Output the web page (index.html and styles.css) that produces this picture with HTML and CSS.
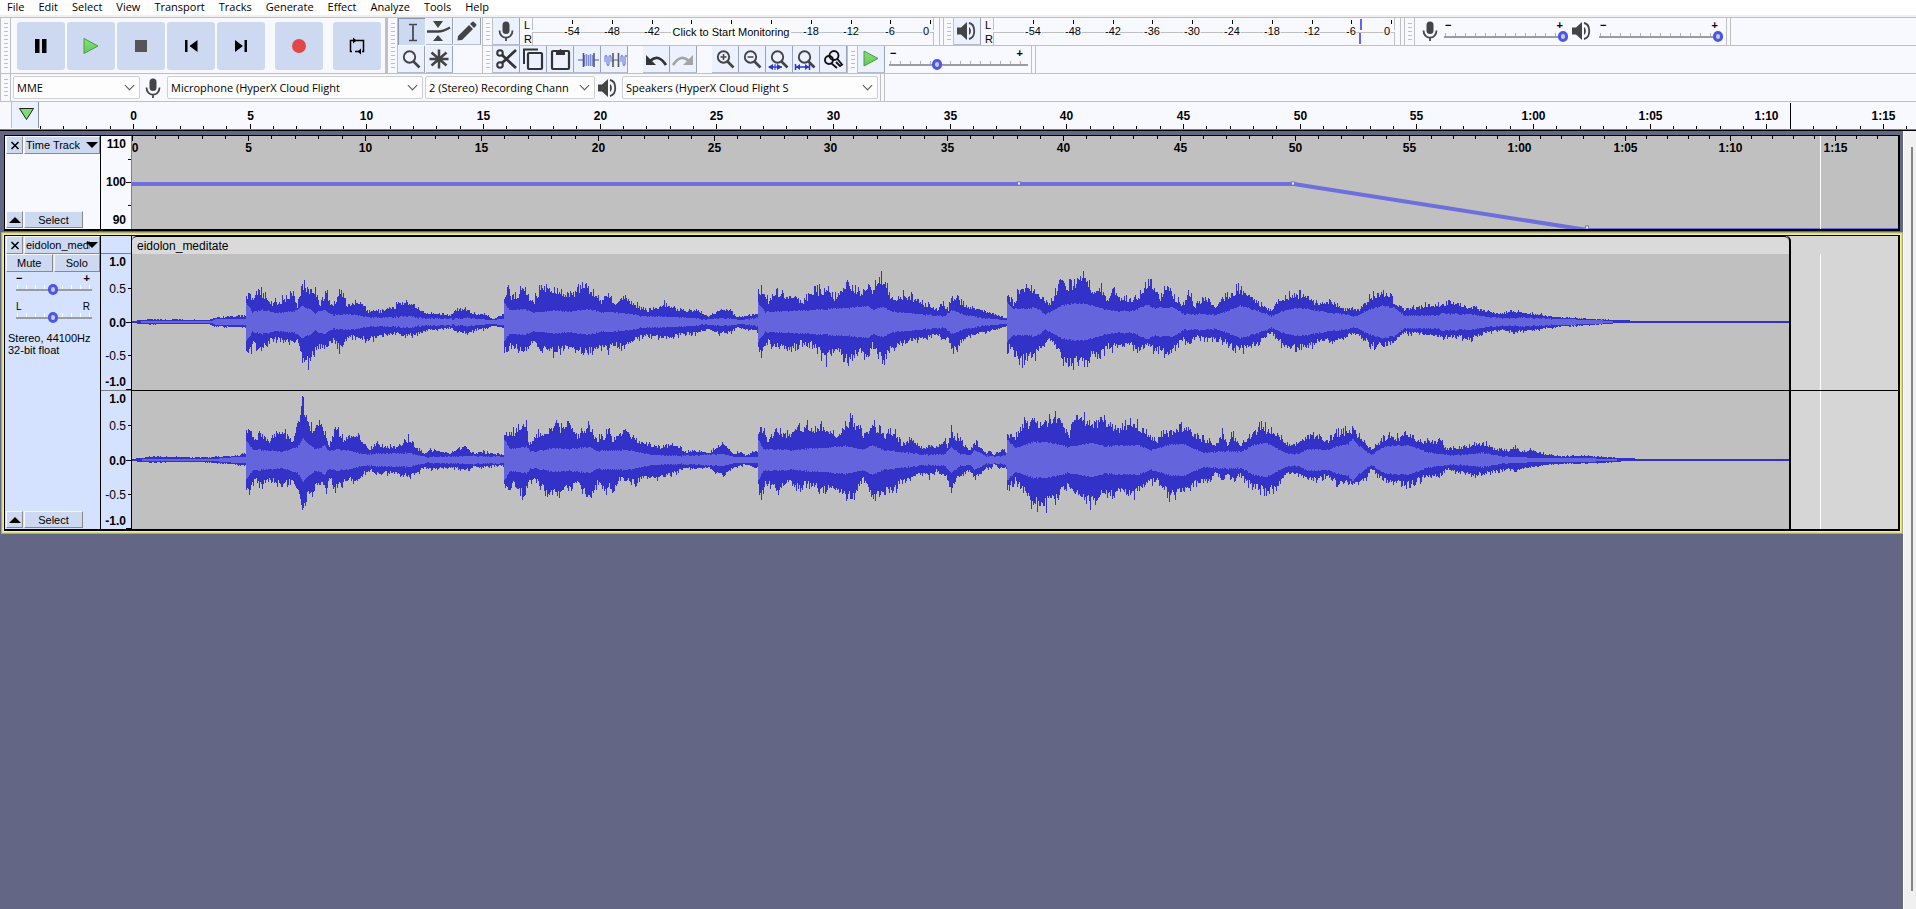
FILE: index.html
```html
<!DOCTYPE html>
<html lang="en">
<head>
  <meta charset="UTF-8">
  <meta name="viewport" content="width=device-width, initial-scale=1.0">
  <title>Audacity</title>
  <link rel="stylesheet" href="styles.css">
</head>
<body>
  <!-- Menu -->
  <nav class="menu">
    <button>File</button><button>Edit</button><button>Select</button><button>View</button><button>Transport</button><button>Tracks</button><button>Generate</button><button>Effect</button><button>Analyze</button><button>Tools</button><button>Help</button>
  </nav>

  <!-- Shared icons -->
  <svg width="0" height="0" class="defs">
    <defs>
      <linearGradient id="green" x1="0" y1="0" x2="0" y2="1"><stop offset="0" stop-color="#8be077"/><stop offset="1" stop-color="#62c95a"/></linearGradient>
      <symbol id="mic" viewBox="0 0 26 26"><rect x="9.500" y="3.500" width="7" height="12.500" rx="3.500" fill="#444"/><path d="M6.500 12.500c0 9.500 13 9.500 13 0M13 19v4" fill="none" stroke="#444" stroke-width="1.800"/></symbol>
      <symbol id="speaker" viewBox="0 0 26 26"><path d="M3 9.500h4L13 4v18l-6-5.500H3z" fill="#444"/><path d="M15 9c2.500 1.500 2.500 6.500 0 8" fill="#444"/><path d="M15 5c7 1.500 7 14.500 0 16" fill="none" stroke="#444" stroke-width="1.800"/></symbol>
      <symbol id="lens" viewBox="0 0 26 26"><circle cx="11.500" cy="11" r="5.700" fill="none" stroke="#444" stroke-width="1.900"/><path d="M15.500 15.500l6 6" stroke="#444" stroke-width="2.600"/></symbol>
    </defs>
  </svg>

  <!-- Toolbars -->
  <header class="dock">
    <div class="bar transport">
      <i class="grip"></i>
      <button class="big" aria-label="Pause"><svg width="24" height="24"><path d="M6 5h4.500v14H6zM13 5h4.500v14H13z"/></svg></button>
      <button class="big" aria-label="Play"><svg width="24" height="24"><path d="M5 4.500v15L19 12z" fill="url(#green)" stroke="#4a9a45"/></svg></button>
      <button class="big" aria-label="Stop"><svg width="24" height="24"><path d="M6 6h12v12H6z" fill="#555"/></svg></button>
      <button class="big" aria-label="Skip to start"><svg width="24" height="24"><path d="M6 6h2.500v12H6zM18.500 6v12l-8-6z"/></svg></button>
      <button class="big" aria-label="Skip to end"><svg width="24" height="24"><path d="M15.500 6H18v12h-2.500zM6 6v12l8-6z"/></svg></button>
      <button class="big apart" aria-label="Record"><svg width="24" height="24"><circle cx="12" cy="12" r="7" fill="#e24646"/></svg></button>
      <button class="big apart" aria-label="Loop"><svg width="24" height="24"><path d="M9 6.500H5.500v11H7M10 17.500h4M10 6.500h8.500v11H17" fill="none" stroke="#000" stroke-width="1.500"/><path d="M8 3.500l3.500 3L8 9.500zM16 14.500l-3.500 3 3.500 3z"/></svg></button>
    </div>

    <div class="bar tools">
      <i class="grip"></i>
      <div class="tool-grid">
        <button class="tool pressed" aria-label="Selection tool"><svg width="26" height="26"><path d="M10 5.500h3l1 .5 1-.5h3M10 21.500h3l1-.5 1 .5h3M14 6v15" fill="none" stroke="#444" stroke-width="1.700"/></svg></button>
        <button class="tool" aria-label="Envelope tool"><svg width="26" height="26"><path d="M1 13.500h11q5 0 12-4" fill="none" stroke="#444" stroke-width="2.500"/><path d="M7 3h10l-5 7zM7 23h10l-5-6z" fill="#444"/></svg></button>
        <button class="tool" aria-label="Draw tool"><svg width="26" height="26"><path d="M4 18l11-11 4 4L8 22l-4.500.5zM16 6l2-2q1-1 2 0l2 2q1 1 0 2l-2 2z" fill="#444"/></svg></button>
        <button class="tool" aria-label="Zoom tool"><svg width="26" height="26"><use href="#lens"/></svg></button>
        <button class="tool" aria-label="Multi-tool"><svg width="26" height="26"><path d="M13 3.500v19M3.500 13h19M5.500 6.500l15 13M20.500 6.500l-15 13" stroke="#444" stroke-width="2.500"/></svg></button>
      </div>
    </div>

    <div class="stack">
      <div class="line">
        <div class="bar">
          <i class="grip"></i>
          <button class="tool" aria-label="Record meter"><svg width="26" height="26"><use href="#mic"/></svg></button>
          <div class="lr"><span>L</span><span>R</span></div>
          <svg class="meter" width="402" height="27" data-meter="record"></svg>
        </div>
        <div class="bar">
          <i class="grip"></i>
          <button class="tool" aria-label="Playback meter"><svg width="26" height="26"><use href="#speaker"/></svg></button>
          <div class="lr"><span>L</span><span>R</span></div>
          <svg class="meter" width="402" height="27" data-meter="play"></svg>
        </div>
        <div class="bar mixer">
          <i class="grip"></i>
          <svg width="26" height="26"><use href="#mic"/></svg>
          <label class="slider level"><span class="ends"><b>−</b><b>+</b></span><input type="range" min="0" max="100" value="100" aria-label="Recording volume"></label>
          <svg width="26" height="26"><use href="#speaker"/></svg>
          <label class="slider level"><span class="ends"><b>−</b><b>+</b></span><input type="range" min="0" max="100" value="100" aria-label="Playback volume"></label>
        </div>
        <div class="filler"></div>
      </div>
      <div class="line">
        <div class="bar edit">
          <i class="grip"></i>
          <div class="group">
            <button class="tool" aria-label="Cut"><svg width="26" height="26"><path d="M23 4L9 17M23 22L9 9" stroke="#333" stroke-width="2.700"/><circle cx="7" cy="7" r="2.800" fill="none" stroke="#333" stroke-width="2"/><circle cx="7" cy="19" r="2.800" fill="none" stroke="#333" stroke-width="2"/></svg></button>
            <button class="tool" aria-label="Copy"><svg width="26" height="26"><path d="M4 18V3.500h14" fill="none" stroke="#333" stroke-width="2"/><rect x="8" y="7" width="14" height="16" rx="1" fill="none" stroke="#333" stroke-width="2.200"/></svg></button>
            <button class="tool" aria-label="Paste"><svg width="26" height="26"><rect x="5" y="5" width="17" height="18" rx="1" fill="none" stroke="#333" stroke-width="2.200"/><path d="M9 5h3q1.500-4 3 0h3v4H9z" fill="#333"/></svg></button>
            <button class="tool" aria-label="Trim"><svg width="26" height="26"><path d="M4 14h5M20 14h5M10.500 9v11M12.500 8v12M14.500 9v11M16.500 8v12M18.500 9v11" stroke="#7b8be0" stroke-width="1.400"/><path d="M9.500 7v14M20 7v14" stroke="#555" stroke-width="1.600"/></svg></button>
            <button class="tool" aria-label="Silence"><svg width="26" height="26"><path d="M4 16v-5q1-3 2 0v7q1 3 2 0v-7q1-3 2 0v5M12 14h5M20 16v-5q1-3 2 0v7q1 3 2 0v-7q1-3 2 0" fill="none" stroke="#7b8be0" stroke-width="1.300"/><path d="M12 7v14M17.500 7v14" stroke="#555" stroke-width="1.600"/></svg></button>
          </div>
          <div class="group">
            <button class="tool" aria-label="Undo"><svg width="26" height="26"><path d="M7 15q8-8 16 4" fill="none" stroke="#333" stroke-width="2.800"/><path d="M3 9v10h10z" fill="#333"/></svg></button>
            <button class="tool" aria-label="Redo"><svg width="26" height="26"><path d="M19 15q-8-8-16 4" fill="none" stroke="#a4a4a4" stroke-width="2.800"/><path d="M23 9v10H13z" fill="#a4a4a4"/></svg></button>
          </div>
          <div class="group">
            <button class="tool" aria-label="Zoom in"><svg width="26" height="26"><use href="#lens"/><path d="M11.500 8v6M8.500 11h6" stroke="#444" stroke-width="1.500"/></svg></button>
            <button class="tool" aria-label="Zoom out"><svg width="26" height="26"><use href="#lens"/><path d="M8.500 11h6" stroke="#444" stroke-width="1.500"/></svg></button>
            <button class="tool" aria-label="Fit selection"><svg width="26" height="26"><use href="#lens"/><path d="M3 21h13" stroke="#2c35c9" stroke-width="1.500"/><path d="M2 21l5-3v6zM16 21l-5-3v6z" fill="#2c35c9"/><path d="M9 18v6" stroke="#2c35c9"/></svg></button>
            <button class="tool" aria-label="Fit project"><svg width="26" height="26"><use href="#lens"/><path d="M2.500 18v6M16.500 18v6M3 21h13" stroke="#2c35c9" stroke-width="1.500"/><path d="M3 21l4-3v6zM16 21l-4-3v6z" fill="#2c35c9"/></svg></button>
            <button class="tool" aria-label="Zoom toggle"><svg width="26" height="26"><g fill="none" stroke="#111" stroke-width="1.900"><circle cx="9" cy="14" r="4"/><circle cx="14" cy="9.500" r="4.500"/><path d="M11 17l6 5M17 12.500l5 6-2 1.500-4-4"/></g></svg></button>
          </div>
        </div>
        <div class="bar speed">
          <i class="grip"></i>
          <button class="tool" aria-label="Play at speed"><svg width="26" height="26"><path d="M6 5v15l14-7.500z" fill="url(#green)" stroke="#4a9a45"/></svg></button>
          <label class="slider wide"><span class="ends"><b>−</b><b>+</b></span><input type="range" min="0" max="100" value="33" aria-label="Playback speed"></label>
        </div>
        <div class="filler"></div>
      </div>
    </div>
  </header>

  <!-- Devices -->
  <div class="devices">
    <div class="bar">
      <i class="grip"></i>
      <span class="drop host"><select aria-label="Audio host"><option>MME</option></select></span>
      <svg width="26" height="26"><use href="#mic"/></svg>
      <span class="drop device"><select aria-label="Recording device"><option>Microphone (HyperX Cloud Flight</option></select></span>
      <span class="drop channels"><select aria-label="Recording channels"><option>2 (Stereo) Recording Chann</option></select></span>
      <svg width="26" height="26"><use href="#speaker"/></svg>
      <span class="drop device"><select aria-label="Playback device"><option>Speakers (HyperX Cloud Flight S</option></select></span>
    </div>
    <div class="filler"></div>
  </div>

  <!-- Timeline -->
  <div class="timeline">
    <button class="pin" aria-label="Pinned play head"><svg width="26" height="26"><path d="M7.500 6.500h14L14.500 17.500z" fill="#7fdc74" stroke="#222"/></svg></button>
    <svg class="ruler" width="1878" height="26" id="timeline"></svg>
  </div>

  <!-- Tracks -->
  <main class="workspace">
    <div class="tracks">
      <section class="track time-track">
        <div class="panel">
          <div class="title-row">
            <button class="chip close" aria-label="Close track"><svg width="16" height="16"><path d="M4.500 5l7 7M11.500 5l-7 7" stroke="#000" stroke-width="1.500"/></svg></button>
            <button class="chip name"><span>Time Track</span><i class="caret"></i></button>
          </div>
          <div class="foot-row">
            <button class="chip close" aria-label="Collapse"><i class="caret up"></i></button>
            <button class="chip select">Select</button>
          </div>
        </div>
        <svg class="scale" width="30" height="93">
          <g class="strong"><text x="25" y="12">110</text><text x="25" y="50">100</text><text x="25" y="88">90</text></g>
          <path d="M27 23.500h4M25 46.500h6M27 69.500h4" stroke="#000"/>
        </svg>
        <div class="body">
          <svg width="1766" height="93" id="warp"></svg>
        </div>
      </section>

      <section class="track audio-track">
        <div class="panel">
          <div class="title-row">
            <button class="chip close" aria-label="Close track"><svg width="16" height="16"><path d="M4.500 5l7 7M11.500 5l-7 7" stroke="#000" stroke-width="1.500"/></svg></button>
            <button class="chip name"><span>eidolon_meditate</span><i class="caret"></i></button>
          </div>
          <div class="mute-row">
            <button class="chip">Mute</button>
            <button class="chip">Solo</button>
          </div>
          <label class="slider small"><span class="ends"><b>−</b><b>+</b></span><input type="range" value="49" aria-label="Gain"></label>
          <label class="slider small"><span class="ends"><em>L</em><em>R</em></span><input type="range" value="49" aria-label="Pan"></label>
          <p class="format">Stereo, 44100Hz<br>32-bit float</p>
          <div class="foot-row">
            <button class="chip close" aria-label="Collapse"><i class="caret up"></i></button>
            <button class="chip select">Select</button>
          </div>
        </div>
        <svg class="scale" width="30" height="293">
          <path d="M0 17.500h31M0 154.500h31" stroke="#808080"/>
          <g class="strong"><text x="25" y="30">1.0</text><text x="25" y="91">0.0</text><text x="25" y="150">-1.0</text><text x="25" y="167">1.0</text><text x="25" y="229">0.0</text><text x="25" y="289">-1.0</text></g>
          <g><text x="25" y="57">0.5</text><text x="25" y="124">-0.5</text><text x="25" y="194">0.5</text><text x="25" y="263">-0.5</text></g>
          <path d="M27 52.500h3M25 86.500h5M27 119.500h3M25 153.500h5M27 189.500h3M25 224.500h5M27 258.500h3M25 292.500h5" stroke="#000"/>
        </svg>
        <div class="body">
          <div class="clip">
            <h2>eidolon_meditate</h2>
            <canvas id="left" width="1657" height="136"></canvas>
            <canvas id="right" width="1657" height="138"></canvas>
          </div>
        </div>
      </section>
    </div>
    <div class="scrollbar"><i></i></div>
  </main>

  <script src="app.js"></script>
</body>
</html>
```

FILE: styles.css
```css
/* General Styles */
* {
  box-sizing: border-box;
}

body {
  margin: 0;
  height: 100vh;
  overflow: hidden;
  display: flex;
  flex-direction: column;
  background-color: #f8f9ff;
  color: #000;
  font-family: "Liberation Sans", Arial, sans-serif;
  font-size: 11px;
}

button {
  display: flex;
  align-items: center;
  justify-content: center;
  padding: 0;
  border: none;
  background: none;
  color: #000;
  font: inherit;
}

svg {
  display: block;
  flex: none;
}

.defs {
  position: absolute;
}

/* Menu */
.menu {
  flex: none;
  display: flex;
  gap: 14px;
  height: 17px;
  padding: 0 7px;
  background: #fff;
  border-bottom: 2px solid #f0f0f0;
  font-family: "Open Sans", "Noto Sans", sans-serif;
  font-size: 11px;
}

.menu button {
  height: 13px;
}

/* Toolbars */
.dock {
  flex: none;
  display: flex;
  height: 57px;
  border-top: 1px solid #c0c0c0;
  border-bottom: 1px solid #c0c0c0;
}

.bar {
  display: flex;
  flex: none;
  border-right: 1px solid #c0c0c0;
  margin-right: 3px;
}

.grip {
  flex: none;
  align-self: stretch;
  width: 11px;
  border-left: 1px solid #c0c0c0;
  border-right: 1px solid #c0c0c0;
  background: repeating-linear-gradient(#c0c0c0 0 1px, transparent 1px 4px) 3px 5px / 4px calc(100% - 9px) no-repeat;
}

.transport {
  align-items: center;
  gap: 2px;
  padding-right: 4px;
  border-right-width: 2px;
  margin-right: 0;
}

.transport .grip {
  margin-right: 4px;
}

.big {
  width: 48px;
  height: 48px;
  border-radius: 3px;
  background: #cdd9f1;
}

.big.apart {
  margin-left: 8px;
}

.tools {
  margin-right: 0;
  border-right: none;
  padding-right: 2px;
}

.tool-grid {
  display: grid;
  grid-template-columns: repeat(3, 26px);
  grid-auto-rows: 27px;
  gap: 1px 2px;
}

.tool {
  width: 27px;
  height: 27px;
  background: #ebf1ff;
  border-right: 1px solid #9aa3bb;
  border-bottom: 1px solid #b4bccf;
}

.tool.pressed {
  background: #cdd9f1;
  border: 1px solid #8a93ab;
  border-right: none;
  border-bottom: none;
}

.stack {
  flex: 1;
  display: flex;
  flex-direction: column;
}

.line {
  display: flex;
  height: 28px;
}

.line + .line {
  height: 27px;
}

.line:first-child {
  border-bottom: 1px solid #c0c0c0;
}

.filler {
  flex: 1;
  border-left: 1px solid #c0c0c0;
}

.line .bar > .meter {
  margin-right: 5px;
}

.lr {
  width: 12px;
  padding-left: 4px;
  display: flex;
  flex-direction: column;
  line-height: 14px;
}

.meter text {
  font-size: 11px;
  text-anchor: middle;
}

.edit {
  gap: 15px;
  margin-right: 0;
  border-right: none;
}

.edit .grip {
  margin-right: -15px;
}

.group {
  display: flex;
}

.speed {
  padding-right: 3px;
}

/* Sliders */
.slider {
  display: flex;
  flex-direction: column;
  padding-top: 3px;
}

.ends {
  display: flex;
  justify-content: space-between;
  padding: 0 5px 0 0;
  height: 9px;
  line-height: 9px;
}

.ends b {
  font-size: 11px;
}

.ends em {
  font-size: 10px;
  font-style: normal;
}

.slider input {
  appearance: none;
  width: 100%;
  height: 12px;
  margin: 0;
  background:
    linear-gradient(#9c9c9c, #9c9c9c) 0 6px / 100% 2px no-repeat,
    repeating-linear-gradient(90deg, transparent 0 1px, #b0b0b0 1px 2px, transparent 2px 10px) 0 3px / 100% 3px no-repeat;
}

.slider input::-webkit-slider-thumb {
  appearance: none;
  width: 10px;
  height: 11px;
  border: 3px solid #4c55e8;
  border-radius: 5px;
  background: #c8c8d8;
}

.mixer {
  padding-right: 3px;
}

.mixer > svg {
  margin-left: 2px;
}

.slider.level {
  width: 124px;
  margin-left: 1px;
}

.slider.level + svg {
  margin-left: 1px;
}

.slider.level:last-child {
  margin-left: 4px;
}

.slider.level .ends,
.slider.wide .ends {
  padding-left: 1px;
}

.slider.wide {
  width: 139px;
  margin-left: 4px;
}

.slider.small {
  width: 76px;
  margin-left: 10px;
  padding-top: 2px;
}

.slider.small + .slider.small {
  margin-top: 5px;
}

.slider.small .ends {
  padding-right: 2px;
}

.slider.small input {
  background:
    linear-gradient(#9c9c9c, #9c9c9c) 0 6px / 100% 2px no-repeat,
    repeating-linear-gradient(90deg, transparent 0 1px, #fff 1px 2px, transparent 2px 9px) 0 2px / 100% 4px no-repeat;
}

/* Devices */
.devices {
  flex: none;
  display: flex;
  height: 28px;
  border-bottom: 1px solid #c0c0c0;
}

.devices .bar {
  align-items: center;
  padding-right: 2px;
}

.drop {
  position: relative;
  height: 23px;
  margin-left: 2px;
}

.drop select {
  appearance: none;
  width: 100%;
  height: 100%;
  padding: 0 20px 0 3px;
  border: 1px solid #d0d0d0;
  border-radius: 2px;
  background: #fdfdfd;
  color: #000;
  font-family: "Open Sans", "Noto Sans", sans-serif;
  font-size: 11px;
}

.drop::after {
  content: "";
  position: absolute;
  top: 6px;
  right: 7px;
  width: 6px;
  height: 6px;
  border: solid #555;
  border-width: 0 1px 1px 0;
  transform: rotate(45deg);
}

.drop.host {
  width: 127px;
}

.drop.device {
  width: 256px;
}

.drop.channels {
  width: 170px;
}

.drop.host + svg,
.drop.channels + svg {
  margin-right: -1px;
}

/* Timeline */
.timeline {
  flex: none;
  display: flex;
  height: 29px;
  padding: 1px 0 0 11px;
  border-bottom: 1px solid #000;
  box-shadow: inset 0 -1px 0 #808080;
}

.pin {
  width: 28px;
  height: 26px;
  margin-top: -1px;
  border-left: 1px solid #c0c0c0;
  border-right: 1px solid #8a93ab;
  background: #ebf1ff;
}

.ruler text,
#warp text {
  font-size: 12px;
  font-weight: bold;
  text-anchor: middle;
}

/* Tracks */
.workspace {
  flex: 1;
  display: flex;
  min-height: 0;
  background: #646686;
}

.tracks {
  flex: 1;
  min-width: 0;
  display: flex;
  flex-direction: column;
  gap: 4px;
  padding: 4px 3px 0 4px;
}

.track {
  display: grid;
  grid-template-columns: 96px 30px 1fr;
  border: 1px solid #000;
  border-width: 1px 2px 2px 1px;
}

.panel {
  display: flex;
  flex-direction: column;
  padding: 0 0 1px 1px;
  border-right: 1px solid #000;
  background: #f8f9ff;
}

.scale {
  background: #f8f9ff;
}

.scale text {
  font-size: 12px;
  text-anchor: end;
}

.strong {
  font-weight: bold;
}

.body {
  overflow: hidden;
  border-left: 1px solid #808080;
  background: #c0c0c0;
}

.audio-track {
  box-shadow: 0 0 0 1px #f5f57d, 0 0 0 2px #d9d987, 0 0 0 3px #a9a985;
}

.audio-track .panel,
.audio-track .scale {
  background: #d5e2ff;
}

.audio-track .body {
  border-left: 1px solid #000;
  background:
    linear-gradient(#000, #000) 0 154px / 100% 1px no-repeat,
    linear-gradient(#fff, #fff) 1688px 18px / 1px 100% no-repeat,
    #d6d6d6;
}

/* Track control panel */
.title-row,
.mute-row,
.foot-row {
  display: flex;
  gap: 1px;
}

.chip {
  height: 17px;
  background: #cdd9f1;
  border: 1px solid;
  border-color: #f4f7ff #8a8a8a #8a8a8a #f4f7ff;
}

.close {
  width: 17px;
}

.title-row .chip,
.mute-row .chip {
  height: 18px;
}

.name {
  flex: 1;
  min-width: 0;
  justify-content: space-between;
  padding: 0 1px;
}

.name span {
  overflow: hidden;
  white-space: nowrap;
}

.caret {
  flex: none;
  border: 6px solid transparent;
  border-top-color: #000;
  border-bottom: none;
}

.name .caret {
  margin-left: -4px;
}

.caret.up {
  border-top: none;
  border-bottom: 6px solid #000;
}

.mute-row .chip {
  flex: 1;
}

.format {
  margin: 9px 0 0 2px;
  line-height: 12px;
}

.foot-row {
  margin-top: auto;
}

.select {
  width: 59px;
}

/* Clip */
.clip {
  width: 1659px;
  border-right: 2px solid #000;
  border-radius: 5px 5px 0 0;
}

.clip h2 {
  margin: 0;
  height: 18px;
  padding-left: 5px;
  border-top: 1px solid #000;
  border-radius: 5px 5px 0 0;
  background: #dadada;
  font-size: 12px;
  font-weight: normal;
  line-height: 18px;
}

.clip canvas {
  display: block;
  background: #c0c0c0;
}

.clip canvas + canvas {
  margin-top: 1px;
}

/* Scrollbar */
.scrollbar {
  width: 13px;
  padding: 16px 3px 18px 0;
  display: flex;
  justify-content: flex-end;
  border-left: 1px solid #fff;
  background: #f0f0f0;
}

.scrollbar i {
  width: 2px;
  background: #868686;
}
```

FILE: app.js
```js
const NS = "http://www.w3.org/2000/svg";

function add(svg, tag, attrs, text) {
  const el = document.createElementNS(NS, tag);
  for (const key in attrs) el.setAttribute(key, attrs[key]);
  if (text !== undefined) el.textContent = text;
  svg.appendChild(el);
  return el;
}

function timeLabel(s) {
  return s < 60 ? String(s) : Math.floor(s / 60) + ":" + String(s % 60).padStart(2, "0");
}

// Main timeline
const timeline = document.getElementById("timeline");
let ticks = "";
for (let s = -4; s <= 76; s++) {
  const x = Math.round(94 + s * 23.333) + 0.5;
  ticks += `M${x} 26v${s % 5 ? -3 : -5}`;
  if (s >= 0 && s % 5 === 0) add(timeline, "text", { x: x, y: 17 }, timeLabel(s));
}
add(timeline, "path", { d: ticks + "M1751.5 0v26", stroke: "#000" });

// Time track ruler, spacing follows the warp
const warp = document.getElementById("warp");
const majors = [0, 116, 233, 349, 466, 582, 698, 815, 931, 1048, 1163, 1277, 1387, 1493, 1598, 1703, 1808];
let marks = "";
for (let s = 0; s < 78; s++) {
  const i = Math.floor(s / 5);
  const x = Math.round(majors[i] + (majors[i + 1] - majors[i]) * (s % 5) / 5) + 0.5;
  marks += `M${x} 0v${s % 5 ? 3 : 5}`;
  if (s % 5 === 0) add(warp, "text", { x: s ? x : 3, y: 16 }, timeLabel(s));
}
add(warp, "path", { d: marks, stroke: "#000" });
add(warp, "path", { d: "M0 48H1162L1455 94H1766", fill: "none", stroke: "#6e6edc", "stroke-width": 4 });
[[887, 47.5], [1161, 47.5], [1455, 91.5]].forEach(([x, y]) => {
  add(warp, "rect", { x: x - 1.5, y: y - 1.5, width: 3, height: 3, fill: "#fff", stroke: "#6e6edc" });
});
add(warp, "path", { d: "M1688.5 0v93", stroke: "#fff" });

// Meters
document.querySelectorAll("[data-meter]").forEach((svg) => {
  add(svg, "path", { d: "M.5 0v12M.5 15v12M401.5 0v12M401.5 15v12M0 14.500H402", stroke: "#c0c0c0", fill: "none" });
  for (let i = 0; i < 10; i++) {
    const x = Math.round(40 + i * 39.8);
    const db = i === 9 ? "0" : String(-54 + i * 6);
    add(svg, "path", { d: `M${x + 0.5} 2v4`, stroke: "#000" });
    if (svg.dataset.meter === "record" && i > 2 && i < 6) continue;
    const label = add(svg, "text", { x: i === 9 ? x - 4 : x, y: 17 }, db);
    label.setAttribute("stroke", "#f8f9ff");
    label.setAttribute("stroke-width", 2);
    label.setAttribute("paint-order", "stroke");
  }
  if (svg.dataset.meter === "record") {
    add(svg, "rect", { x: 139, y: 6, width: 120, height: 16, fill: "#fff" });
    add(svg, "text", { x: 199, y: 18 }, "Click to Start Monitoring");
  } else {
    add(svg, "path", { d: "M368 1v11M367 15v11", stroke: "#6464f0", "stroke-width": 2 });
  }
});

// Waveforms: [x, peak above, peak below] and [x, rms]
const left = {
  peaks: [[0,1,1],[18,3,3],[40,3,2],[75,2,2],[84,5,5],[113,7,6],[114,27,30],[117,33,34],[121,24,24],[127,35,32],[133,28,27],[140,21,18],[150,24,20],[161,32,25],[165,17,20],[170,42,43],[175,36,44],[183,31,33],[188,20,25],[193,32,28],[201,17,20],[208,32,30],[215,17,16],[229,22,17],[235,12,20],[250,12,14],[262,17,13],[272,23,15],[283,18,14],[294,10,10],[318,8,7],[326,15,11],[335,13,12],[345,8,8],[354,9,8],[360,3,4],[371,9,6],[372,27,32],[375,37,32],[379,27,24],[392,36,34],[401,21,22],[407,35,30],[422,38,33],[438,29,28],[453,42,34],[469,23,26],[476,33,30],[483,18,24],[488,29,28],[508,16,17],[515,13,14],[533,20,18],[547,13,14],[565,12,12],[576,6,8],[588,14,13],[599,12,11],[604,5,6],[625,9,10],[626,30,31],[629,36,36],[636,23,22],[642,33,28],[651,30,28],[662,31,28],[670,20,22],[679,33,24],[694,36,40],[703,27,30],[715,44,42],[729,30,32],[736,44,42],[740,32,24],[747,50,38],[752,44,42],[760,25,28],[774,30,22],[792,20,18],[804,13,13],[811,20,18],[816,14,18],[820,28,34],[829,21,22],[836,16,16],[845,15,13],[858,10,10],[874,4,5],[875,32,29],[881,20,30],[888,38,42],[901,36,38],[910,28,28],[916,19,20],[922,28,25],[930,50,40],[936,38,48],[942,44,44],[949,48,42],[954,44,50],[960,32,34],[967,38,40],[976,24,26],[981,36,28],[990,25,28],[999,24,24],[1005,25,32],[1015,40,26],[1022,38,30],[1028,27,30],[1035,40,36],[1042,27,28],[1051,19,18],[1056,34,24],[1062,17,16],[1072,27,18],[1083,17,18],[1088,25,19],[1106,36,30],[1110,34,30],[1123,23,26],[1139,13,11],[1151,27,26],[1162,31,29],[1175,28,28],[1186,19,20],[1198,24,22],[1210,14,18],[1221,15,13],[1227,14,14],[1238,27,25],[1251,33,26],[1262,22,22],[1273,14,12],[1294,18,14],[1309,20,16],[1327,20,17],[1338,16,19],[1353,13,12],[1368,9,9],[1383,12,11],[1402,9,9],[1420,6,6],[1446,4,4],[1467,3,3],[1485,2,1],[1510,1,1],[1658,1,1]],
  rms: [[0,0],[18,1],[80,1],[84,3],[113,3],[114,19],[120,10],[129,12],[147,9],[162,11],[170,16],[179,12],[183,9],[192,12],[201,7],[215,8],[233,5],[251,4],[276,6],[286,4],[322,3],[336,4],[358,2],[371,3],[372,19],[378,11],[392,13],[401,9],[422,12],[433,10],[454,13],[469,10],[490,9],[508,6],[537,5],[572,3],[594,4],[608,2],[625,4],[626,19],[633,10],[679,12],[715,14],[736,16],[740,12],[751,15],[761,10],[794,7],[813,6],[819,12],[836,6],[858,3],[874,2],[875,19],[881,13],[904,14],[913,8],[922,12],[929,16],[942,19],[954,18],[968,14],[979,11],[1000,11],[1014,17],[1022,14],[1040,15],[1051,8],[1069,8],[1083,7],[1108,16],[1123,12],[1139,6],[1152,11],[1163,14],[1177,13],[1190,10],[1210,8],[1221,6],[1227,7],[1238,13],[1251,16],[1262,14],[1273,6],[1306,7],[1311,9],[1316,8],[1338,8],[1354,5],[1370,4],[1400,4],[1420,3],[1466,2],[1485,0],[1658,0]]
};
const right = {
  peaks: [[0,1,1],[20,4,3],[60,3,2],[80,3,3],[105,5,5],[113,7,7],[114,30,28],[117,35,36],[123,19,20],[127,31,28],[137,22,22],[144,31,24],[151,30,27],[160,21,22],[165,40,34],[168,46,44],[169,60,56],[171,62,54],[174,44,44],[177,40,35],[181,29,34],[186,42,24],[192,32,30],[194,27,42],[197,14,18],[203,36,32],[211,21,25],[217,26,20],[225,30,26],[231,18,15],[238,11,11],[244,19,16],[251,14,14],[265,15,15],[276,23,18],[283,14,16],[292,7,8],[297,11,10],[318,8,8],[326,13,10],[333,15,11],[342,7,8],[349,9,8],[371,6,6],[372,31,30],[376,31,36],[381,31,28],[387,36,34],[393,42,38],[397,18,22],[404,29,22],[414,28,38],[422,36,38],[433,34,30],[438,42,32],[445,26,24],[456,35,42],[465,22,25],[473,27,36],[477,36,26],[480,23,36],[487,26,22],[491,35,22],[504,23,25],[513,18,18],[526,14,20],[542,18,14],[553,9,9],[567,10,10],[576,7,8],[591,20,18],[601,7,8],[608,9,7],[613,5,5],[625,10,9],[626,31,31],[629,36,36],[635,22,24],[647,31,32],[656,27,24],[665,33,30],[674,36,27],[694,35,34],[703,27,30],[712,36,38],[719,44,42],[726,36,30],[731,25,22],[740,38,42],[745,34,38],[753,27,36],[761,31,34],[769,18,22],[779,22,20],[792,13,14],[797,18,18],[804,14,12],[813,24,20],[815,15,18],[819,31,31],[824,25,22],[831,18,15],[838,11,12],[844,19,20],[854,7,8],[858,10,10],[861,6,5],[870,11,9],[874,8,8],[875,31,31],[883,23,22],[888,36,30],[901,44,48],[914,38,48],[922,48,42],[929,42,34],[937,28,28],[941,48,38],[946,48,36],[956,42,46],[965,42,44],[970,42,34],[976,40,40],[985,34,34],[1001,40,38],[1012,33,28],[1024,19,21],[1029,27,28],[1038,31,39],[1054,36,32],[1063,26,25],[1076,20,24],[1083,17,14],[1090,29,22],[1096,17,16],[1100,28,21],[1108,16,17],[1119,25,28],[1128,36,32],[1137,32,33],[1145,30,30],[1153,18,16],[1164,16,14],[1175,26,21],[1184,28,23],[1195,20,17],[1203,28,25],[1221,34,27],[1227,26,23],[1234,17,20],[1239,11,9],[1249,22,21],[1257,27,26],[1266,24,24],[1275,30,28],[1286,22,22],[1294,20,19],[1309,21,17],[1314,12,10],[1329,13,14],[1340,17,17],[1351,19,16],[1364,12,12],[1377,10,10],[1383,15,14],[1390,9,9],[1400,11,8],[1411,7,6],[1428,4,4],[1450,5,4],[1476,3,3],[1493,2,1],[1511,1,1],[1658,1,1]],
  rms: [[0,0],[20,1],[80,1],[105,3],[113,3],[114,19],[120,11],[151,8],[165,13],[171,22],[176,16],[183,11],[192,14],[197,8],[204,11],[233,6],[276,7],[294,3],[340,4],[371,3],[372,20],[378,11],[394,13],[399,8],[422,12],[438,11],[456,13],[465,9],[494,10],[519,5],[547,4],[591,6],[601,3],[625,3],[626,20],[631,11],[662,10],[715,14],[731,10],[740,15],[751,10],[794,5],[813,6],[819,13],[828,6],[838,5],[842,10],[854,4],[873,4],[875,20],[883,12],[901,18],[914,18],[929,15],[935,13],[958,17],[972,14],[1004,15],[1019,10],[1037,15],[1051,16],[1072,7],[1094,9],[1108,8],[1122,15],[1133,17],[1144,12],[1153,7],[1164,6],[1175,10],[1184,11],[1195,10],[1203,13],[1216,16],[1220,21],[1227,14],[1234,8],[1239,5],[1249,12],[1257,14],[1275,15],[1286,11],[1294,8],[1314,5],[1329,5],[1351,7],[1364,5],[1377,3],[1411,2],[1450,2],[1476,1],[1493,0],[1658,0]]
};

function at(points, x, col) {
  let i = 0;
  while (i < points.length - 2 && points[i + 1][0] <= x) i++;
  const a = points[i], b = points[i + 1];
  return a[col] + (b[col] - a[col]) * Math.min(1, (x - a[0]) / (b[0] - a[0]));
}

function drawWave(id, data, middle, seed) {
  const ctx = document.getElementById(id).getContext("2d");
  const rand = () => {
    seed = (seed * 16807) % 2147483647;
    return seed / 2147483647;
  };
  const jitter = (v) => v < 2 ? v : v * (rand() < 0.15 ? 1 + rand() * 0.12 : 0.76 + rand() * 0.22);
  for (let x = 0; x < 1657; x++) {
    const up = Math.round(jitter(at(data.peaks, x, 1)));
    const down = Math.round(jitter(at(data.peaks, x, 2)));
    const base = at(data.rms, x, 1);
    const rms = Math.min(up, down, Math.round(base + (base > 3 ? rand() * 1.6 - 0.8 : 0)));
    ctx.fillStyle = "#3232c8";
    ctx.fillRect(x, middle - up, 1, up + down);
    if (rms > 0) {
      ctx.fillStyle = "#6464dc";
      ctx.fillRect(x, middle - rms, 1, rms * 2);
    }
  }
}

drawWave("left", left, 68, 4127);
drawWave("right", right, 69, 9931);
```
